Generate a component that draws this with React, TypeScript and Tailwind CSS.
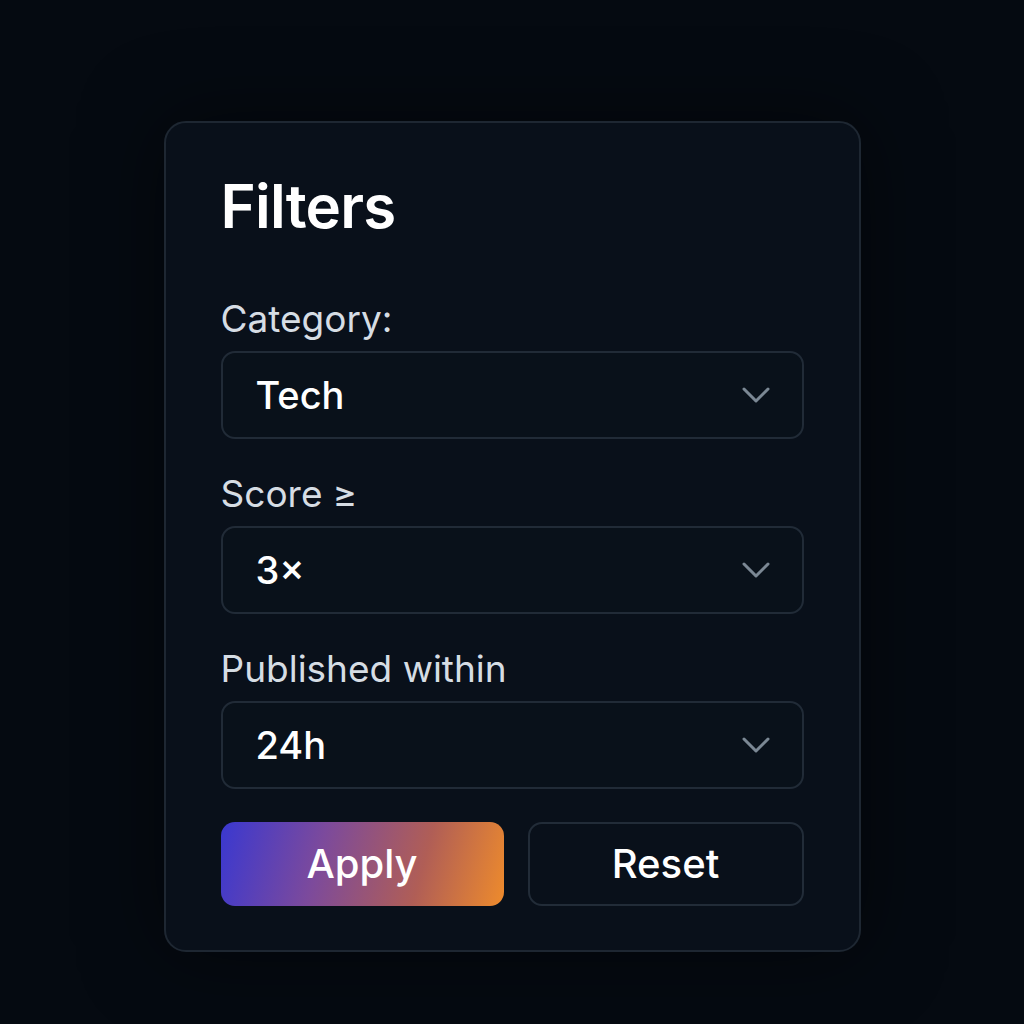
const font = { fontFamily: "Inter, 'Noto Sans', sans-serif" };

function Chevron() {
  return (
    <svg width="28" height="18" viewBox="0 0 28 18" fill="none" className="text-[#7b8894]">
      <path d="M2 3l12 12L26 3" stroke="currentColor" strokeWidth="3" strokeLinecap="round" strokeLinejoin="round" />
    </svg>
  );
}

function SelectField({ label, value }: { label: string; value: string }) {
  return (
    <div>
      <div className="text-[37px] leading-[44px] text-[#d6dde4] mb-[10px]">{label}</div>
      <div className="h-[88px] rounded-[14px] border-2 border-[#212b37] bg-[#09111a] flex items-center justify-between pl-[33px] pr-[32px]">
        <span className="text-[38px] font-medium text-white">{value}</span>
        <Chevron />
      </div>
    </div>
  );
}

export default function App() {
  return (
    <div className="min-h-screen bg-[#050a11] flex justify-center pt-[121px]" style={font}>
      <div className="w-[697px] h-[831px] rounded-[22px] border-2 border-[#1e2732] bg-[#09101a] px-[55px] pt-[47px] shadow-[0_0_80px_rgba(0,0,0,0.5)]">
        <h1 className="text-[60px] leading-[72px] font-semibold text-white tracking-[-0.8px]">Filters</h1>
        <div className="mt-[55px] flex flex-col gap-[33px]">
          <SelectField label="Category:" value="Tech" />
          <SelectField label="Score ≥" value="3×" />
          <SelectField label="Published within" value="24h" />
        </div>
        <div className="mt-[33px] flex gap-[24px]">
          <button className="w-[283px] h-[84px] rounded-[14px] bg-[linear-gradient(105deg,#3a38d0_0%,#7c4a9c_35%,#b05e56_70%,#ee8b2c_100%)] text-[40px] font-medium text-white">
            Apply
          </button>
          <button className="flex-1 h-[84px] rounded-[14px] border-2 border-[#222c38] text-[40px] font-medium text-white">
            Reset
          </button>
        </div>
      </div>
    </div>
  );
}
